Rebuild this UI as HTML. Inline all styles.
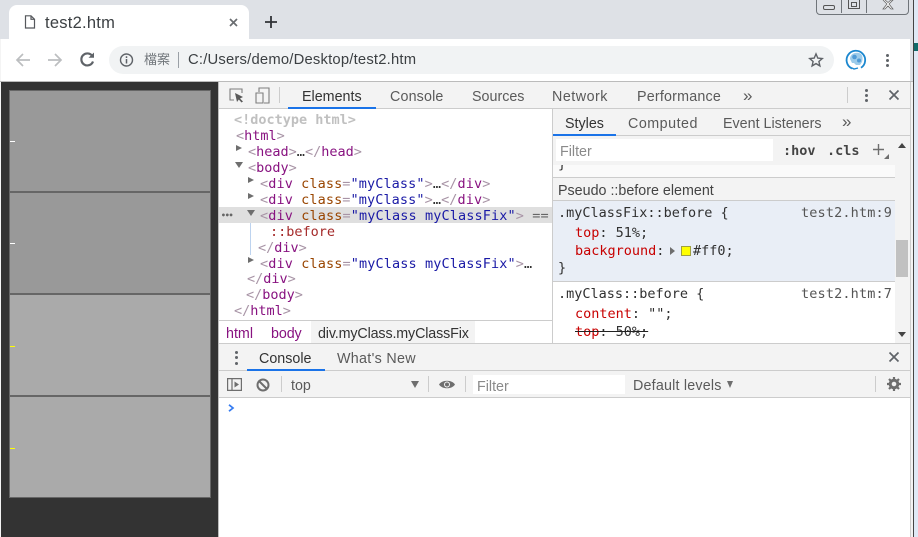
<!DOCTYPE html>
<html><head><meta charset="utf-8"><style>
html,body{margin:0;padding:0;width:918px;height:537px;overflow:hidden;background:#fff;}
body{position:relative;font-family:"Liberation Sans","Noto Sans CJK TC",sans-serif;}
.a{position:absolute;}
.t{position:absolute;white-space:pre;line-height:16px;height:16px;font-size:14.3px;color:#5a5a5a;margin-top:1px;}
.m{position:absolute;white-space:pre;line-height:16px;height:16px;font-family:"DejaVu Sans Mono","Liberation Mono",monospace;font-size:13.5px;color:#303030;}
.e{margin-top:1px;}
.w{letter-spacing:.1px;}
.b{color:#a894a6}.g{color:#881280}.n{color:#994500}.v{color:#1a1aa6}.r{color:#c80000}
svg{position:absolute;overflow:visible;}
.tri{position:absolute;width:0;height:0;}
.tr{position:absolute;width:0;height:0;border-left:6px solid #6e6e6e;border-top:3.500px solid transparent;border-bottom:3.500px solid transparent;}
.td{position:absolute;width:0;height:0;border-top:6px solid #6e6e6e;border-left:4px solid transparent;border-right:4px solid transparent;}
.box{position:absolute;left:9px;width:200px;height:100px;border:1px solid #666;}
.mk{position:absolute;left:10px;width:5px;height:1px;}
</style></head><body>
<!-- chrome bg -->
<div class="a" style="left:0;top:0;width:913px;height:81px;background:#dee1e6"></div>
<div class="a" style="left:913px;top:0;width:1px;height:537px;background:#444"></div>
<div class="a" style="left:914px;top:0;width:4px;height:537px;background:#dfe9f5"></div>
<div class="a" style="left:914px;top:43px;width:4px;height:8px;background:#0f6a6a"></div>
<div class="a" style="left:1px;top:39px;width:909px;height:42px;background:#fff"></div>
<div class="a" style="left:0;top:39px;width:1px;height:498px;background:#f4f4f4"></div>
<!-- window controls -->
<div class="a" style="left:816px;top:-4px;width:91px;height:17px;border:1px solid #70757a;border-radius:0 0 4px 4px"></div>
<div class="a" style="left:841px;top:0;width:1px;height:13px;background:#70757a"></div>
<div class="a" style="left:866px;top:0;width:1px;height:13px;background:#70757a"></div>
<div class="a" style="left:823px;top:5px;width:10px;height:3px;border:1px solid #555;border-radius:2px"></div>
<div class="a" style="left:848px;top:-1px;width:10px;height:8px;border:1px solid #555"></div>
<div class="a" style="left:851px;top:2px;width:4px;height:3px;border:1px solid #555"></div>
<svg style="left:882px;top:0" width="12" height="10"><path d="M1 0 L5 4 L1 9 H3 L6 6 L9 9 H11 L7 4 L11 0 H9 L6 2.500 L3 0" fill="#fff" stroke="#666" stroke-width=".8"/></svg>
<!-- tab -->
<div class="a" style="left:9px;top:5px;width:240px;height:34px;background:#fff;border-radius:8px 8px 0 0"></div>
<svg style="left:24px;top:15px" width="12" height="14"><path d="M1.500 .8 H7 L10.500 4.300 V13 H1.500 Z M7 .8 V4.300 H10.500" fill="none" stroke="#55585c" stroke-width="1.200"/></svg>
<div class="t" style="left:45px;top:14px;font-size:16.500px;letter-spacing:.25px;color:#3c4043">test2.htm</div>
<svg style="left:229px;top:18px" width="9" height="9"><path d="M1 1 L8 8 M8 1 L1 8" stroke="#6a6d71" stroke-width="1.700"/></svg>
<svg style="left:265px;top:16px" width="12" height="12"><path d="M6 0 V12 M0 6 H12" stroke="#303337" stroke-width="1.800"/></svg>
<!-- toolbar icons -->
<svg style="left:15px;top:52px" width="16" height="16"><path d="M15 8 H2 M8 2 L2 8 L8 14" fill="none" stroke="#bcbec0" stroke-width="1.700"/></svg>
<svg style="left:47px;top:52px" width="16" height="16"><path d="M1 8 H14 M8 2 L14 8 L8 14" fill="none" stroke="#bcbec0" stroke-width="1.700"/></svg>
<svg style="left:80px;top:52px" width="15" height="15"><path d="M12.300 4 A6 6 0 1 0 13 9.500" fill="none" stroke="#5f6368" stroke-width="2.200"/><path d="M8.500 5.800 H14 V.5 Z" fill="#5f6368"/></svg>
<!-- omnibox -->
<div class="a" style="left:109px;top:46px;width:725px;height:28px;background:#f1f3f4;border-radius:14px"></div>
<svg style="left:120px;top:53px" width="14" height="14"><circle cx="6.500" cy="7" r="6" fill="none" stroke="#5f6368" stroke-width="1.400"/><path d="M6.500 6 V10.500 M6.500 3.300 V5" stroke="#5f6368" stroke-width="1.500"/></svg>
<div class="t" style="left:144px;top:51px;font-size:13px;color:#70757a">檔案</div>
<div class="a" style="left:178px;top:52px;width:1px;height:16px;background:#9aa0a6"></div>
<div class="t" style="left:188px;top:51px;font-size:14.800px;letter-spacing:.2px;color:#3c4043">C:/Users/demo/Desktop/test2.htm</div>
<svg style="left:809px;top:53px" width="14" height="14"><path d="M7 .9 L8.800 5.100 L13.300 5.500 L9.900 8.500 L10.900 12.900 L7 10.600 L3.100 12.900 L4.100 8.500 L.7 5.500 L5.200 5.100 Z" fill="none" stroke="#5f6368" stroke-width="1.400"/></svg>
<svg style="left:846px;top:50px" width="20" height="20"><circle cx="10" cy="10" r="9.500" fill="#fff"/><path d="M6 18.500 A9.300 9.300 0 1 1 15 17.800" fill="none" stroke="#1b87cf" stroke-width="1.800"/><path d="M4 9 C4 4 9 2 13 3 C17 4 17 9 16 12 L14 15 H10 L8 13 H6 Z" fill="#9ccbea"/><circle cx="8.500" cy="7" r="2.300" fill="#4f9ad6"/><circle cx="13" cy="10.500" r="2" fill="#4f9ad6"/><path d="M6 18 L8 19 L12 18" stroke="#1b87cf" stroke-width="1.400" fill="none"/></svg>
<div class="a" style="left:886px;top:54px;width:3px;height:3px;background:#5f6368;border-radius:2px"></div>
<div class="a" style="left:886px;top:59px;width:3px;height:3px;background:#5f6368;border-radius:2px"></div>
<div class="a" style="left:886px;top:64px;width:3px;height:3px;background:#5f6368;border-radius:2px"></div>
<div class="a" style="left:0;top:81px;width:913px;height:1px;background:#bbb"></div>
<!-- left page -->
<div class="a" style="left:1px;top:82px;width:217px;height:455px;background:#333"></div>
<div class="a" style="left:218px;top:82px;width:1px;height:455px;background:#bdbdbd"></div>
<div class="box" style="top:90px;background:#999"></div>
<div class="box" style="top:192px;background:#999"></div>
<div class="box" style="top:294px;background:#aaa"></div>
<div class="box" style="top:396px;background:#aaa"></div>
<div class="mk" style="top:141px;background:#fff"></div>
<div class="mk" style="top:243px;background:#fff"></div>
<div class="mk" style="top:346px;background:#ff0"></div>
<div class="mk" style="top:448px;background:#ff0"></div>
<!-- devtools -->
<div class="a" style="left:219px;top:82px;width:691px;height:455px;background:#fff"></div>
<div class="a" style="left:910px;top:82px;width:1px;height:455px;background:#ccc"></div>
<div class="a" style="left:911px;top:82px;width:2px;height:455px;background:#f2f2f2"></div>
<div class="a" style="left:219px;top:82px;width:691px;height:26px;background:#f3f3f3"></div>
<div class="a" style="left:219px;top:108px;width:691px;height:1px;background:#ccc"></div>
<svg style="left:229px;top:88px" width="15" height="15"><path d="M5 12 H1 V1 H13 V5" fill="none" stroke="#7e7e7e" stroke-width="1.100"/><path d="M6 5 L14 9 L11 10.500 L14 13.500 L12.500 14.500 L9.800 11.500 L8 14 Z" fill="#5a5a5a"/></svg>
<svg style="left:255px;top:87px" width="15" height="17"><path d="M4 5 V1 H14 V16 H9 M1 6 H8 V16 H1 Z" fill="none" stroke="#7e7e7e" stroke-width="1.100"/></svg>
<div class="a" style="left:279px;top:87px;width:1px;height:16px;background:#ccc"></div>
<div class="t" style="left:302px;top:88px;color:#333">Elements</div>
<div class="a" style="left:288px;top:107px;width:88px;height:2px;background:#1a73e8"></div>
<div class="t" style="left:390px;top:88px;letter-spacing:.15px">Console</div>
<div class="t" style="left:472px;top:88px">Sources</div>
<div class="t" style="left:552px;top:88px;letter-spacing:.5px">Network</div>
<div class="t" style="left:637px;top:88px;letter-spacing:.2px">Performance</div>
<div class="t" style="left:743px;top:87px;font-size:17px">»</div>
<div class="a" style="left:847px;top:87px;width:1px;height:16px;background:#ccc"></div>
<div class="a" style="left:865px;top:89px;width:3px;height:3px;background:#5f6368;border-radius:2px"></div>
<div class="a" style="left:865px;top:94px;width:3px;height:3px;background:#5f6368;border-radius:2px"></div>
<div class="a" style="left:865px;top:99px;width:3px;height:3px;background:#5f6368;border-radius:2px"></div>
<svg style="left:889px;top:90px" width="10" height="10"><path d="M.5 .5 L9.500 9.500 M9.500 .5 L.5 9.500" stroke="#5f6368" stroke-width="1.700"/></svg>
<!-- elements panel -->
<div class="a" style="left:219px;top:207px;width:333px;height:16px;background:#dfdfdf"></div>
<div class="a" style="left:250px;top:223px;width:1px;height:32px;background:#bdd3ef"></div>
<div class="m e" style="left:234px;top:111px;color:#c0c0c0;font-weight:bold">&lt;!doctype html&gt;</div>
<div class="m e" style="left:236px;top:127px"><span class="b">&lt;</span><span class="g">html</span><span class="b">&gt;</span></div>
<div class="tr" style="left:236px;top:145px"></div>
<div class="m e" style="left:248px;top:143px"><span class="b">&lt;</span><span class="g">head</span><span class="b">&gt;</span>…<span class="b">&lt;/</span><span class="g">head</span><span class="b">&gt;</span></div>
<div class="td" style="left:235px;top:162px"></div>
<div class="m e" style="left:248px;top:159px"><span class="b">&lt;</span><span class="g">body</span><span class="b">&gt;</span></div>
<div class="tr" style="left:248px;top:177px"></div>
<div class="m e w" style="left:260px;top:175px"><span class="b">&lt;</span><span class="g">div</span> <span class="n">class</span><span class="b">=</span><span class="v">"myClass"</span><span class="b">&gt;</span>…<span class="b">&lt;/</span><span class="g">div</span><span class="b">&gt;</span></div>
<div class="tr" style="left:248px;top:193px"></div>
<div class="m e w" style="left:260px;top:191px"><span class="b">&lt;</span><span class="g">div</span> <span class="n">class</span><span class="b">=</span><span class="v">"myClass"</span><span class="b">&gt;</span>…<span class="b">&lt;/</span><span class="g">div</span><span class="b">&gt;</span></div>
<div class="m" style="left:221px;top:208px;font-size:8px;color:#666;font-weight:bold;letter-spacing:-1px">•••</div>
<div class="td" style="left:247px;top:210px"></div>
<div class="m e" style="left:260px;top:207px;letter-spacing:.12px"><span class="b">&lt;</span><span class="g">div</span> <span class="n">class</span><span class="b">=</span><span class="v">"myClass myClassFix"</span><span class="b">&gt;</span> <span style="color:#666">==</span></div>
<div class="m e" style="left:270px;top:223px;color:#a52a2a">::before</div>
<div class="m e" style="left:258px;top:239px"><span class="b">&lt;/</span><span class="g">div</span><span class="b">&gt;</span></div>
<div class="tr" style="left:248px;top:257px"></div>
<div class="m e" style="left:260px;top:255px;letter-spacing:.12px"><span class="b">&lt;</span><span class="g">div</span> <span class="n">class</span><span class="b">=</span><span class="v">"myClass myClassFix"</span><span class="b">&gt;</span>…</div>
<div class="m e" style="left:247px;top:270px"><span class="b">&lt;/</span><span class="g">div</span><span class="b">&gt;</span></div>
<div class="m e" style="left:246px;top:286px"><span class="b">&lt;/</span><span class="g">body</span><span class="b">&gt;</span></div>
<div class="m e" style="left:234px;top:302px"><span class="b">&lt;/</span><span class="g">html</span><span class="b">&gt;</span></div>
<!-- breadcrumbs -->
<div class="a" style="left:219px;top:320px;width:333px;height:1px;background:#ccc"></div>
<div class="a" style="left:311px;top:321px;width:164px;height:22px;background:#f3f3f3"></div>
<div class="t" style="left:226px;top:325px;color:#881280">html</div>
<div class="t" style="left:271px;top:325px;color:#881280;letter-spacing:-.1px">body</div>
<div class="t" style="left:318px;top:325px;color:#333;letter-spacing:-.14px">div.myClass.myClassFix</div>
<!-- styles panel -->
<div class="a" style="left:552px;top:109px;width:1px;height:234px;background:#ccc"></div>
<div class="a" style="left:553px;top:109px;width:357px;height:26px;background:#f3f3f3"></div>
<div class="a" style="left:553px;top:135px;width:357px;height:1px;background:#ccc"></div>
<div class="a" style="left:553px;top:134px;width:63px;height:2px;background:#1a73e8"></div>
<div class="t" style="left:565px;top:115px;color:#333">Styles</div>
<div class="t" style="left:628px;top:115px;letter-spacing:.5px">Computed</div>
<div class="t" style="left:723px;top:115px">Event Listeners</div>
<div class="t" style="left:842px;top:113px;font-size:17px">»</div>
<div class="a" style="left:553px;top:136px;width:342px;height:29px;background:#f3f3f3"></div>
<div class="a" style="left:556px;top:139px;width:217px;height:22px;background:#fff"></div>
<div class="t" style="left:560px;top:143px;color:#8a8a8a">Filter</div>
<div class="m e" style="left:783px;top:142px;font-weight:bold;color:#444">:hov</div>
<div class="m e" style="left:827px;top:142px;font-weight:bold;color:#444">.cls</div>
<svg style="left:873px;top:144px" width="16" height="15"><path d="M5.500 0 V11 M0 5.500 H11" stroke="#6e6e6e" stroke-width="1.400"/><path d="M16 10 V15 H11 Z" fill="#6e6e6e"/></svg>
<div class="a" style="left:553px;top:165px;width:342px;height:12px;background:#fafafa;overflow:hidden"><div class="m" style="left:5px;top:-9px">}</div></div>
<div class="a" style="left:553px;top:177px;width:342px;height:1px;background:#ccc"></div>
<div class="a" style="left:553px;top:178px;width:342px;height:23px;background:#f3f3f3"></div>
<div class="t" style="left:558px;top:182px;color:#444">Pseudo ::before element</div>
<div class="a" style="left:553px;top:200px;width:342px;height:1px;background:#ccc"></div>
<div class="a" style="left:553px;top:201px;width:342px;height:80px;background:#e9eef6"></div>
<div class="a" style="left:553px;top:281px;width:342px;height:1px;background:#ccc"></div>
<div class="m" style="left:558px;top:205px">.myClassFix::before {</div>
<div class="m" style="left:801px;top:205px;color:#555;letter-spacing:.15px">test2.htm:9</div>
<div class="m" style="left:575px;top:225px"><span class="r">top</span>: 51%;</div>
<div class="m" style="left:575px;top:243px"><span class="r">background</span>:</div>
<div class="tri" style="left:670px;top:247px;border-left:5px solid #6e6e6e;border-top:4px solid transparent;border-bottom:4px solid transparent"></div>
<div class="a" style="left:681px;top:246px;width:8px;height:8px;background:#ff0;border:1px solid #a0a040"></div>
<div class="m" style="left:693px;top:243px">#ff0;</div>
<div class="m" style="left:558px;top:260px">}</div>
<div class="m" style="left:558px;top:286px">.myClass::before {</div>
<div class="m" style="left:801px;top:286px;color:#555;letter-spacing:.15px">test2.htm:7</div>
<div class="m" style="left:575px;top:306px"><span class="r">content</span>: "";</div>
<div class="m" style="left:575px;top:324px;text-decoration:line-through;text-decoration-color:#222"><span class="r">top</span>: 50%;</div>
<!-- scrollbar -->
<div class="a" style="left:895px;top:136px;width:15px;height:207px;background:#f3f3f3"></div>
<div class="a" style="left:896px;top:240px;width:12px;height:37px;background:#c1c1c1"></div>
<div class="tri" style="left:898px;top:143px;border-bottom:5px solid #444;border-left:4px solid transparent;border-right:4px solid transparent"></div>
<div class="tri" style="left:898px;top:332px;border-top:5px solid #444;border-left:4px solid transparent;border-right:4px solid transparent"></div>
<!-- drawer -->
<div class="a" style="left:219px;top:343px;width:691px;height:1px;background:#ccc"></div>
<div class="a" style="left:219px;top:344px;width:691px;height:53px;background:#f3f3f3"></div>
<div class="a" style="left:219px;top:370px;width:691px;height:1px;background:#ccc"></div>
<div class="a" style="left:219px;top:397px;width:691px;height:1px;background:#ccc"></div>
<div class="a" style="left:235px;top:351px;width:3px;height:3px;background:#5f6368;border-radius:2px"></div>
<div class="a" style="left:235px;top:356px;width:3px;height:3px;background:#5f6368;border-radius:2px"></div>
<div class="a" style="left:235px;top:362px;width:3px;height:3px;background:#5f6368;border-radius:2px"></div>
<div class="t" style="left:259px;top:350px;color:#333">Console</div>
<div class="a" style="left:247px;top:369px;width:78px;height:2px;background:#1a73e8"></div>
<div class="t" style="left:337px;top:350px;letter-spacing:.3px">What's New</div>
<svg style="left:889px;top:352px" width="10" height="10"><path d="M.5 .5 L9.500 9.500 M9.500 .5 L.5 9.500" stroke="#5f6368" stroke-width="1.700"/></svg>
<svg style="left:227px;top:378px" width="15" height="13"><path d="M.6 .6 H14.400 V12.400 H.6 Z M5 .6 V12.400" fill="none" stroke="#6e6e6e" stroke-width="1.200"/><path d="M7.500 3.500 L12 6.500 L7.500 9.500 Z" fill="#6e6e6e"/></svg>
<svg style="left:256px;top:378px" width="14" height="14"><circle cx="7" cy="7" r="5.500" fill="none" stroke="#6e6e6e" stroke-width="2"/><path d="M3 3 L11 11" stroke="#6e6e6e" stroke-width="2"/></svg>
<div class="a" style="left:281px;top:376px;width:1px;height:16px;background:#ccc"></div>
<div class="t" style="left:291px;top:377px">top</div>
<div class="tri" style="left:411px;top:381px;border-top:7px solid #6e6e6e;border-left:4px solid transparent;border-right:4px solid transparent"></div>
<div class="a" style="left:428px;top:376px;width:1px;height:16px;background:#ccc"></div>
<svg style="left:439px;top:379px" width="16" height="11"><path d="M0 5.500 C3 .5 13 .5 16 5.500 C13 10.500 3 10.500 0 5.500 Z" fill="#6e6e6e"/><circle cx="8" cy="5.500" r="3" fill="#f3f3f3"/><circle cx="8" cy="5.500" r="2" fill="#6e6e6e"/></svg>
<div class="a" style="left:465px;top:376px;width:1px;height:16px;background:#ccc"></div>
<div class="a" style="left:473px;top:375px;width:152px;height:19px;background:#fff"></div>
<div class="t" style="left:477px;top:378px;color:#8a8a8a">Filter</div>
<div class="t" style="left:633px;top:377px;letter-spacing:.2px">Default levels</div>
<div class="tri" style="left:727px;top:381px;border-top:7px solid #6e6e6e;border-left:3.500px solid transparent;border-right:3.500px solid transparent"></div>
<div class="a" style="left:875px;top:376px;width:1px;height:16px;background:#ccc"></div>
<svg style="left:887px;top:377px" width="14" height="14"><circle cx="7" cy="7" r="3.800" fill="none" stroke="#6e6e6e" stroke-width="3"/><path d="M7 0 V14 M0 7 H14 M2 2 L12 12 M12 2 L2 12" stroke="#6e6e6e" stroke-width="2.200" stroke-dasharray="2.500 9 2.500 0"/></svg>
<svg style="left:228px;top:404px" width="7" height="8"><path d="M1 .8 L5 4 L1 7.200" fill="none" stroke="#367cf1" stroke-width="1.700"/></svg>
</body></html>
